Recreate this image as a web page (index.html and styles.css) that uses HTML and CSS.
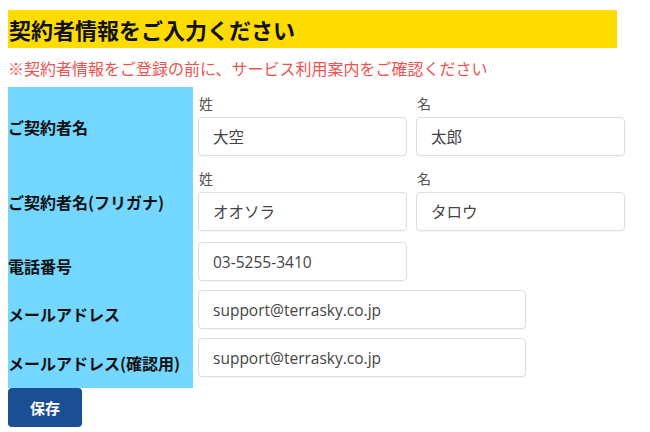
FILE: index.html
```html
<!doctype html>
<html lang="ja">
	<head>
		<meta charset="UTF-8" />
		<meta name="viewport" content="width=device-width, initial-scale=1.0" />
		<title>契約者情報</title>
		<link rel="stylesheet" href="styles.css">
	</head>
	<body>
		<h1 class="title">契約者情報をご入力ください</h1>
		<p class="notice">※契約者情報をご登録の前に、サービス利用案内をご確認ください</p>

		<form class="contract-form">
			<div class="row names">
				<div class="label">ご契約者名</div>
				<div class="fields">
					<div class="name-part">
						<span class="sub-label">姓</span>
						<input type="text" class="input name" value="大空" />
					</div>
					<div class="name-part">
						<span class="sub-label">名</span>
						<input type="text" class="input name" value="太郎" />
					</div>
				</div>
			</div>

			<div class="row names">
				<div class="label">ご契約者名(フリガナ)</div>
				<div class="fields">
					<div class="name-part">
						<span class="sub-label">姓</span>
						<input type="text" class="input name" value="オオソラ" />
					</div>
					<div class="name-part">
						<span class="sub-label">名</span>
						<input type="text" class="input name" value="タロウ" />
					</div>
				</div>
			</div>

			<div class="row">
				<div class="label">電話番号</div>
				<div class="fields">
					<input type="tel" class="input phone" value="03-5255-3410" />
				</div>
			</div>

			<div class="row">
				<div class="label">メールアドレス</div>
				<div class="fields">
					<input type="email" class="input mail" value="support@terrasky.co.jp" />
				</div>
			</div>

			<div class="row last">
				<div class="label">メールアドレス(確認用)</div>
				<div class="fields">
					<input type="email" class="input mail" value="support@terrasky.co.jp" />
				</div>
			</div>

			<button type="button" class="save">保存</button>
		</form>
	</body>
</html>
```

FILE: styles.css
```css
html,
body,
h1,
p {
	margin: 0;
	padding: 0;
}

body {
	padding: 10px 8px;
	font-family: "Noto Sans CJK JP", "Noto Sans", sans-serif;
	color: #111;
	background-color: #fff;
}

.title {
	width: 608px;
	height: 38px;
	padding-left: 1px;
	background-color: #ffdc00;
	font-size: 22px;
	line-height: 38px;
	font-weight: bold;
}

.notice {
	margin: 9px 0 8px;
	font-size: 16px;
	line-height: 22px;
	color: #f0524f;
}

.contract-form {
	display: flex;
	flex-direction: column;
	align-items: flex-start;
}

.row {
	display: grid;
	grid-template-columns: 185px auto;
	column-gap: 5px;
}

.label {
	display: flex;
	align-items: center;
	padding-top: 10px;
	background-color: #74d7ff;
	font-size: 16px;
	font-weight: bold;
}

.row.names .label {
	padding-top: 4px;
}

.row.last .label {
	padding-top: 5px;
}

.fields {
	display: flex;
	gap: 9px;
	padding: 5px 0 4px;
}

.row.names .fields {
	padding-bottom: 6px;
}

.row.last .fields {
	padding-bottom: 11px;
}

.name-part {
	display: flex;
	flex-direction: column;
	gap: 3px;
}

.sub-label {
	padding-left: 1px;
	font-size: 14px;
	line-height: 22px;
	color: #555;
}

/* every text box shares the same rounded light frame */
.input {
	box-sizing: border-box;
	height: 39px;
	padding: 0 14px;
	border: 1px solid #dedede;
	border-radius: 4px;
	box-shadow: 0 1px 1px rgba(0, 0, 0, 0.04);
	font-family: "Open Sans", "Noto Sans CJK JP", sans-serif;
	font-size: 15.5px;
	color: #444;
	background-color: #fff;
}

.input.name,
.input.phone {
	width: 209px;
}

.input.mail {
	width: 328px;
}

.save {
	width: 74px;
	height: 39px;
	border: none;
	border-radius: 4px;
	background-color: #1b4f93;
	color: #fff;
	font-family: "Noto Sans CJK JP", sans-serif;
	font-size: 15px;
	font-weight: bold;
}
```
